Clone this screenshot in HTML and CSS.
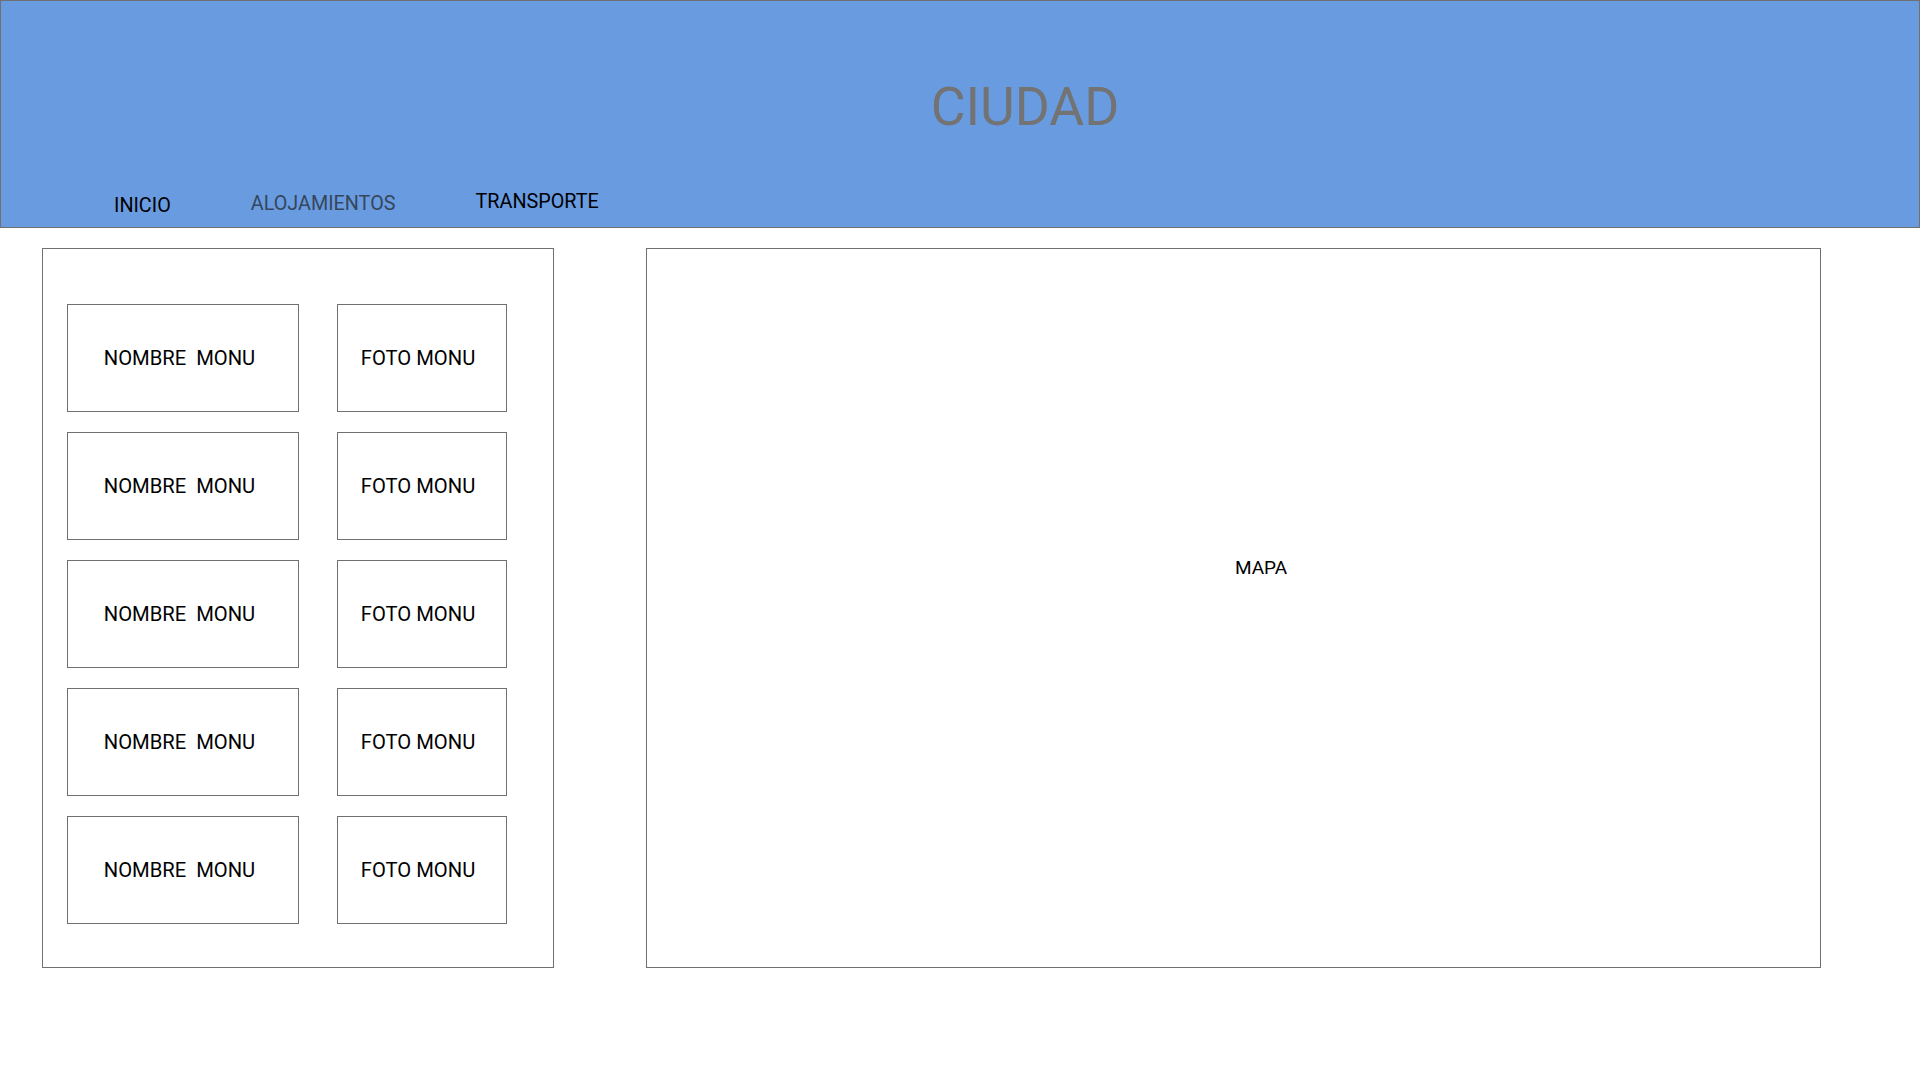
FILE: index.html
```html
<!DOCTYPE html>
<html lang="es">
<head>
<meta charset="utf-8">
<title>Ciudad</title>
<link rel="stylesheet" href="styles.css">
</head>
<body>
<header class="header">
  <h1 class="title">CIUDAD</h1>
  <nav class="nav">
    <a class="nav-item nav-inicio">INICIO</a>
    <a class="nav-item nav-aloj">ALOJAMIENTOS</a>
    <a class="nav-item nav-trans">TRANSPORTE</a>
  </nav>
</header>
<main class="main">
  <section class="panel">
    <div class="grid">
      <div class="card card-name">NOMBRE  MONU</div>
      <div class="card card-photo">FOTO MONU</div>
      <div class="card card-name">NOMBRE  MONU</div>
      <div class="card card-photo">FOTO MONU</div>
      <div class="card card-name">NOMBRE  MONU</div>
      <div class="card card-photo">FOTO MONU</div>
      <div class="card card-name">NOMBRE  MONU</div>
      <div class="card card-photo">FOTO MONU</div>
      <div class="card card-name">NOMBRE  MONU</div>
      <div class="card card-photo">FOTO MONU</div>
    </div>
  </section>
  <section class="map">MAPA</section>
</main>
</body>
</html>
```
FILE: styles.css
```css
* { box-sizing: border-box; }
html, body { margin: 0; padding: 0; background: #ffffff; }
body { font-family: Roboto, "Liberation Sans", Arial, sans-serif; color: #000; }

.header {
  height: 228px;
  background: #699be1;
  border: 1px solid #707070;
  padding-top: 79px;
}
.title {
  margin: 0;
  font-weight: 400;
  font-size: 53.5px;
  line-height: 53px;
  color: #737373;
  text-align: center;
  padding-left: 130px;
}
.nav {
  display: flex;
  align-items: flex-start;
  gap: 80px;
  margin-top: 63px;
  padding-left: 113px;
}
.nav-item {
  font-size: 19.8px;
  line-height: 1;
  color: #000;
  text-decoration: none;
}
.nav-aloj { color: #36465b; margin-top: -2px; }
.nav-trans { margin-top: -4px; }

.main {
  display: flex;
  align-items: flex-start;
  gap: 92px;
  padding: 20px 0 0 42px;
}
.panel {
  width: 512px;
  height: 720px;
  border: 1px solid #707070;
  padding: 55px 0 0 24px;
}
.grid {
  display: grid;
  grid-template-columns: 232px 170px;
  grid-auto-rows: 108px;
  column-gap: 38px;
  row-gap: 20px;
}
.card {
  border: 1px solid #707070;
  display: flex;
  align-items: center;
  justify-content: center;
  padding: 1px 7px 0 0;
  font-size: 20.2px;
  line-height: 1;
  white-space: pre;
}
.card-photo { padding-right: 8px; }

.map {
  width: 1175px;
  height: 720px;
  border: 1px solid #707070;
  padding-top: 309px;
  padding-left: 55px;
  text-align: center;
  font-size: 19px;
  line-height: 1;
}
```
